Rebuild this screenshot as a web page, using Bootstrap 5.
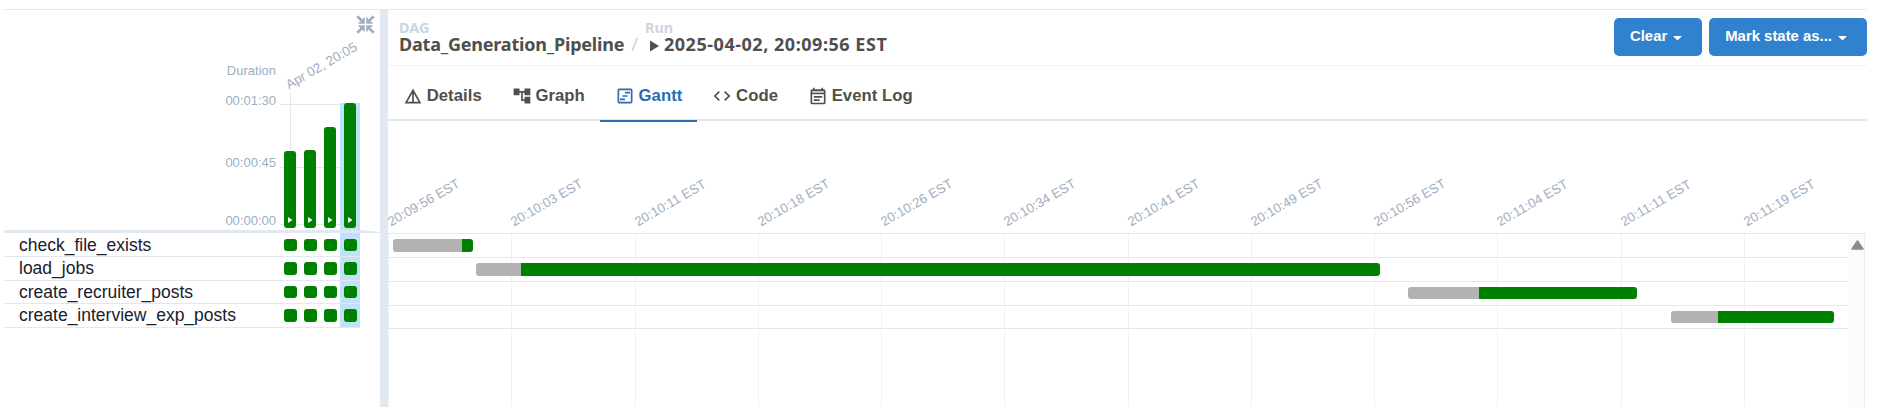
<!DOCTYPE html>
<html lang="en">
<head>
<meta charset="utf-8">
<title>Data_Generation_Pipeline</title>
<link rel="stylesheet" href="https://cdn.jsdelivr.net/npm/bootstrap@5.3.0/dist/css/bootstrap.min.css">
<style>
:root{--line:#e2e8f0;--muted:#a0aec0;--ink:#4f4f4e}
body{font-family:"Liberation Sans",Arial,sans-serif;background:#fff;overflow:hidden;color:#1a202c}
.shell{height:407px;padding:9px 11px 0 4px}
.shell-in{border-top:1px solid var(--line)}
/* left panel */
.grid-pane{width:376px}
.chart{height:220px;font-size:13px;color:var(--muted);line-height:16px}
.scale{width:272px;padding-right:0}
.plot{left:276px;right:20px;top:0;bottom:0}
.tick-line{height:1px;left:0;right:0;background:var(--line)}
.run-col{width:20px;padding-bottom:2px}
.run-col.sel,.cell.sel{background:#bee3f8}
.run-bar{width:12px;border-radius:3px;background:green;padding-bottom:4px}
.run-date{left:286.5px;top:67px;transform:rotate(-30deg);transform-origin:0 100%;font-size:13.3px}
.rule-thick{height:3px;background:var(--line);clip-path:polygon(0 0,356px 0,100% 2px,100% 3px,0 3px)}
.task{width:356px;height:24px;border-bottom:1px solid var(--line);font-size:17.5px;line-height:22px}
.task.short{height:23px}
.task-name{padding-left:15px;width:276px}
.cell{width:20px;height:100%;padding:5px 3px 0 4px}
.sq{height:13px;border-radius:3px;background:green}
.task.first .cell{padding-top:6px}
.task.first .task-name{padding-top:1px}
.task.first .sq,.task.short .sq{height:12px}
.splitter{width:8px;background:var(--line);margin-top:-1px}
/* details */
.crumbs{height:56px;border-bottom:1px solid #edf2f7;font-family:"Noto Sans","Open Sans",sans-serif;color:var(--ink);font-weight:700;padding-left:11px}
.crumb{padding-top:10px}
.crumb-cap{font-size:14.4px;line-height:15px;color:#cbd5e0}
.crumb-val{font-size:18px;line-height:18px;white-space:nowrap}
.dag-id{letter-spacing:-.2px}
.run-id{letter-spacing:.53px}
.btn-air{background:#3182ce;color:#fff;font-weight:700;font-size:14.9px;height:38px;border-radius:5px;padding:0 19px 2px 15px;--bs-btn-hover-bg:#2b6cb0}
.tabs{height:55px;border-bottom:2px solid var(--line);font-size:16.7px;font-weight:700;letter-spacing:.05px}
.tabs .nav-link{color:var(--ink);height:56px;padding:3px 15px 0;gap:3.7px}
.tabs .nav-link.active{color:#2b6cb0;border-bottom:2px solid #2b6cb0;padding-top:5px}
.tabs svg{width:20px;height:20px;fill:currentColor}
.axis{height:112px;font-size:13.2px;color:var(--muted);line-height:16px}
.axis-col{width:123.27px;flex:none;padding-bottom:3px}
.axis-col span{display:block;white-space:nowrap;transform:rotate(-30deg);transform-origin:0 100%;margin-left:5px}
.lanes{border-top:1px solid var(--line);height:174px}
.lane{height:24px;border-bottom:1px solid var(--line);padding-top:5px}
.lane.short{height:23px}
.seg{height:13px}
.lane.thin .seg,.lane.short .seg{height:12px}
.wait{background:#b2b2b2;border-radius:3px 0 0 3px}
.work{background:green;border-radius:0 3px 3px 0}
.vline{width:123.27px;flex:none;border-left:1px solid #edf2f7}
.track{width:17px;background:#fbfbfb;border-right:1px solid #e8edf3;margin-right:2px;padding-top:6px}
</style>
</head>
<body>
<div class="shell">
<div class="shell-in d-flex h-100">
  <aside class="grid-pane flex-none position-relative">
    <div class="chart position-relative">
      <svg class="position-absolute" style="left:352px;top:5px" width="19" height="19" viewBox="0 0 19 19" fill="#a0aec0"><g id="q"><path d="M8.800 8.800H2.500V7.600L4.600 6.400.300 2.300 2.300.300 6.400 4.600 7.600 2.500H8.800z"/></g><use href="#q" transform="translate(19) scale(-1 1)"/><use href="#q" transform="translate(0 19) scale(1 -1)"/><use href="#q" transform="translate(19 19) scale(-1)"/></svg>
      <div class="scale text-end">
        <div style="padding-top:53px">Duration</div>
        <div style="padding-top:14px">00:01:30</div>
        <div style="padding-top:46px">00:00:45</div>
        <div style="padding-top:42px">00:00:00</div>
      </div>
      <div class="run-date position-absolute text-nowrap">Apr 02, 20:05</div>
      <div class="plot position-absolute">
        <div class="position-absolute z-n1" style="left:10px;top:83px;width:1px;height:60px;background:#e2e8f0"></div>
        <div class="d-flex h-100 align-items-end">
          <div class="run-col d-flex justify-content-center"><div class="run-bar d-flex align-items-end justify-content-center" style="height:77px"><svg width="6" height="8"><path d="M1 1l4.500 3L1 7z" fill="#fff"/></svg></div></div>
          <div class="run-col d-flex justify-content-center"><div class="run-bar d-flex align-items-end justify-content-center" style="height:78px"><svg width="6" height="8"><path d="M1 1l4.500 3L1 7z" fill="#fff"/></svg></div></div>
          <div class="run-col d-flex justify-content-center"><div class="run-bar d-flex align-items-end justify-content-center" style="height:101px"><svg width="6" height="8"><path d="M1 1l4.500 3L1 7z" fill="#fff"/></svg></div></div>
          <div class="run-col sel d-flex justify-content-center"><div class="run-bar d-flex align-items-end justify-content-center" style="height:125px"><svg width="6" height="8"><path d="M1 1l4.500 3L1 7z" fill="#fff"/></svg></div></div>
        </div>
        <div class="tick-line position-absolute z-n1" style="top:94px"></div>
        <div class="tick-line position-absolute z-n1" style="top:157px"></div>
        <div class="tick-line position-absolute z-n1" style="top:214px"></div>
      </div>
    </div>
    <div class="rule-thick"></div>
    <div class="task first d-flex"><div class="task-name">check_file_exists</div><div class="cell"><div class="sq"></div></div><div class="cell"><div class="sq"></div></div><div class="cell"><div class="sq"></div></div><div class="cell sel"><div class="sq"></div></div></div>
    <div class="task d-flex"><div class="task-name">load_jobs</div><div class="cell"><div class="sq"></div></div><div class="cell"><div class="sq"></div></div><div class="cell"><div class="sq"></div></div><div class="cell sel"><div class="sq"></div></div></div>
    <div class="task short d-flex"><div class="task-name">create_recruiter_posts</div><div class="cell"><div class="sq"></div></div><div class="cell"><div class="sq"></div></div><div class="cell"><div class="sq"></div></div><div class="cell sel"><div class="sq"></div></div></div>
    <div class="task d-flex"><div class="task-name">create_interview_exp_posts</div><div class="cell"><div class="sq"></div></div><div class="cell"><div class="sq"></div></div><div class="cell"><div class="sq"></div></div><div class="cell sel"><div class="sq"></div></div></div>
  </aside>
  <div class="splitter"></div>
  <main class="flex-grow-1 overflow-hidden" style="width:0">
    <header class="crumbs d-flex">
      <div class="crumb"><div class="crumb-cap">DAG</div><div class="crumb-val dag-id">Data_Generation_Pipeline</div></div>
      <div class="crumb-val fw-normal" style="color:#cbd5e0;padding:25px 7px 0 7px">/</div>
      <div class="crumb"><div class="crumb-cap">Run</div><div class="crumb-val run-id d-flex align-items-center"><svg class="ms-1 me-1 mt-1" width="11" height="12"><path d="M1 .500l9 5.500-9 5.500z" fill="#4f4f4e"/></svg>2025-04-02, 20:09:56 EST</div></div>
      <div class="ms-auto d-flex" style="gap:7px;padding-top:8px;font-family:'Liberation Sans',sans-serif">
        <button class="btn btn-air d-flex align-items-center" style="gap:6px">Clear <svg class="mt-1" width="9" height="5"><path d="M0 0h9L4.500 4.500z" fill="#fff"/></svg></button>
        <button class="btn btn-air d-flex align-items-center" style="gap:6px">Mark state as... <svg class="mt-1" width="9" height="5"><path d="M0 0h9L4.500 4.500z" fill="#fff"/></svg></button>
      </div>
    </header>
    <nav class="tabs nav flex-nowrap">
      <a class="nav-link d-flex align-items-center"><svg viewBox="0 0 24 24"><path d="M12 3L2 21h20L12 3zm1 5.920L18.600 19H13V8.920zm-2 0V19H5.400L11 8.920z"/></svg>Details</a>
      <a class="nav-link d-flex align-items-center"><svg viewBox="0 0 24 24"><path d="M22 11V3h-7v3H9V3H2v8h7V8h2v10h4v3h7v-8h-7v3h-2V8h2v3z"/></svg>Graph</a>
      <a class="nav-link active d-flex align-items-center"><svg viewBox="0 0 24 24"><path d="M19 5v14H5V5h14m0-2H5a2 2 0 0 0-2 2v14a2 2 0 0 0 2 2h14a2 2 0 0 0 2-2V5a2 2 0 0 0-2-2zM12 7h6v2h-6zM9 11h6v2H9zM6 15h6v2H6z"/></svg>Gantt</a>
      <a class="nav-link d-flex align-items-center"><svg viewBox="0 0 24 24"><path d="M9.400 16.600L4.800 12l4.600-4.600L8 6l-6 6 6 6 1.400-1.400zm5.200 0l4.600-4.600-4.600-4.600L16 6l6 6-6 6-1.400-1.400z"/></svg>Code</a>
      <a class="nav-link d-flex align-items-center"><svg viewBox="0 0 24 24"><path opacity=".3" d="M5 6h14v2H5z"/><path d="M19 4h-1V2h-2v2H8V2H6v2H5c-1.110 0-2 .900-2 2v14a2 2 0 0 0 2 2h14c1.100 0 2-.900 2-2V6c0-1.100-.900-2-2-2zm0 16H5V10h14v10zm0-12H5V6h14v2zM7 12h10v2H7zM7 16h7v2H7z"/></svg>Event Log</a>
    </nav>
    <div class="axis d-flex align-items-end">
      <div class="axis-col"><span>20:09:56 EST</span></div><div class="axis-col"><span>20:10:03 EST</span></div><div class="axis-col"><span>20:10:11 EST</span></div><div class="axis-col"><span>20:10:18 EST</span></div><div class="axis-col"><span>20:10:26 EST</span></div><div class="axis-col"><span>20:10:34 EST</span></div><div class="axis-col"><span>20:10:41 EST</span></div><div class="axis-col"><span>20:10:49 EST</span></div><div class="axis-col"><span>20:10:56 EST</span></div><div class="axis-col"><span>20:11:04 EST</span></div><div class="axis-col"><span>20:11:11 EST</span></div><div class="axis-col"><span>20:11:19 EST</span></div>
    </div>
    <div class="lanes d-flex">
      <div class="flex-grow-1 position-relative overflow-hidden">
        <div class="position-absolute top-0 start-0 h-100 d-flex z-n1">
          <div class="vline"></div><div class="vline"></div><div class="vline"></div><div class="vline"></div><div class="vline"></div><div class="vline"></div><div class="vline"></div><div class="vline"></div><div class="vline"></div><div class="vline"></div><div class="vline"></div><div class="vline"></div>
        </div>
        <div class="lane d-flex"><div class="seg wait" style="margin-left:5px;width:69px"></div><div class="seg work" style="width:11px"></div></div>
        <div class="lane d-flex"><div class="seg wait" style="margin-left:88px;width:45px"></div><div class="seg work" style="width:859px"></div></div>
        <div class="lane thin d-flex"><div class="seg wait" style="margin-left:1020px;width:71px"></div><div class="seg work" style="width:158px"></div></div>
        <div class="lane short d-flex"><div class="seg wait" style="margin-left:1283px;width:47px"></div><div class="seg work" style="width:116px"></div></div>
      </div>
      <div class="track d-flex justify-content-end"><svg width="13" height="10"><path d="M6.500 1L12 9H1z" fill="#8b8b8b" stroke="#8b8b8b" stroke-width="1.500" stroke-linejoin="round"/></svg></div>
    </div>
  </main>
</div>
</div>
<script src="https://cdn.jsdelivr.net/npm/bootstrap@5.3.0/dist/js/bootstrap.bundle.min.js"></script>
</body>
</html>
